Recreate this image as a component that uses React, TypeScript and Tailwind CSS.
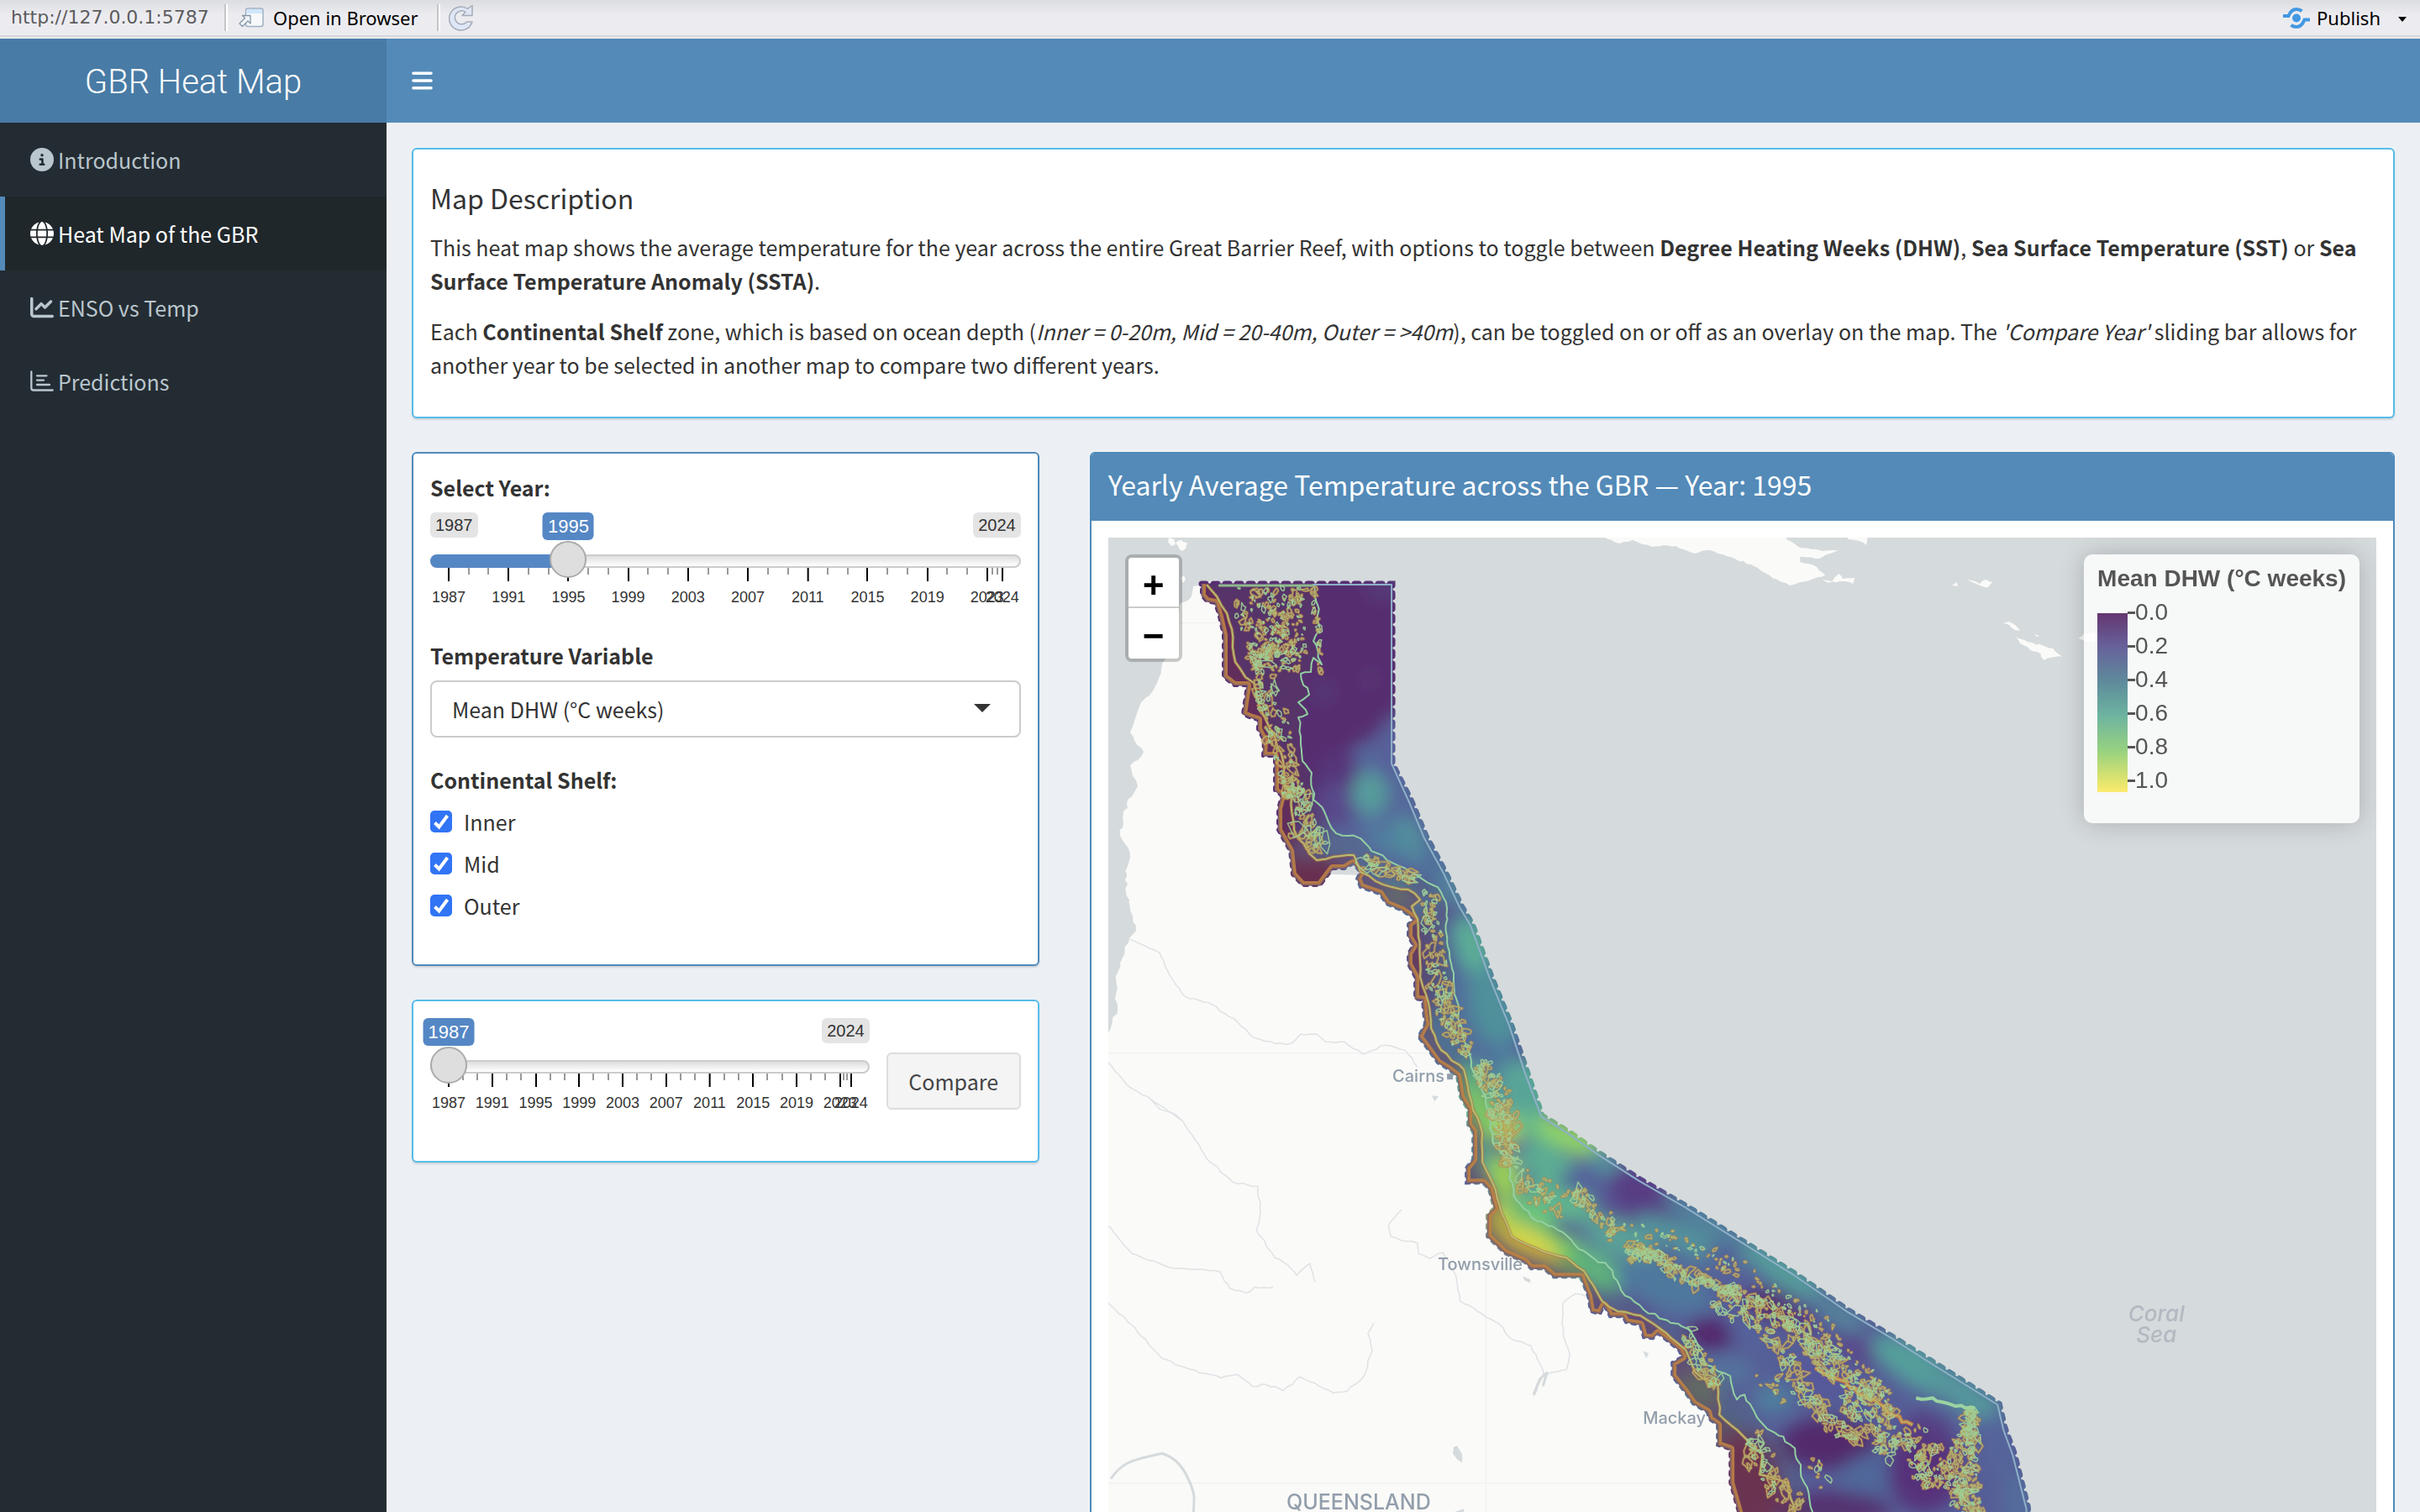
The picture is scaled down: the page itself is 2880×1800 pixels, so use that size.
import { useState } from "react";
import type { ReactNode } from "react";
import { FaBars, FaChartLine, FaCircleInfo, FaGlobe } from "react-icons/fa6";

/* ------------------------------------------------------------------ */
/* Geometry helpers                                                    */
/* ------------------------------------------------------------------ */

type Pt = [number, number];

function rng(seed: number) {
  let a = seed;
  return () => {
    a = (a + 0x6d2b79f5) | 0;
    let t = Math.imul(a ^ (a >>> 15), 1 | a);
    t = (t + Math.imul(t ^ (t >>> 7), 61 | t)) ^ t;
    return ((t ^ (t >>> 14)) >>> 0) / 4294967296;
  };
}

function parse(src: string): Pt[] {
  return src.split(" ").map((p) => {
    const [x, y] = p.split(",");
    return [Number(x), Number(y)] as Pt;
  });
}

/** Subdivides a polyline and offsets the new points, for natural edges. */
function rough(points: Pt[], step: number, amount: number, seed: number): Pt[] {
  const r = rng(seed);
  const out: Pt[] = [points[0]];
  for (let i = 1; i < points.length; i++) {
    const [ax, ay] = points[i - 1];
    const [bx, by] = points[i];
    const n = Math.max(1, Math.round(Math.hypot(bx - ax, by - ay) / step));
    for (let k = 1; k <= n; k++) {
      const t = k / n;
      const j = k === n ? 0 : amount;
      out.push([ax + (bx - ax) * t + (r() - 0.5) * 2 * j, ay + (by - ay) * t + (r() - 0.5) * 2 * j]);
    }
  }
  return out;
}

function toPath(points: Pt[], close = false) {
  return "M" + points.map(([x, y]) => `${x.toFixed(1)} ${y.toFixed(1)}`).join("L") + (close ? "Z" : "");
}

type Band = { path: [number, number, number][]; count: number; size: number; tilt: number };

/** Scatters small irregular reef outlines along bands of varying width, in a warm and a cool set. */
function reefs(bands: Band[], seed: number) {
  const r = rng(seed);
  const sets = ["", ""];
  for (const b of bands) {
    const lens = b.path.slice(1).map((p, i) => Math.hypot(p[0] - b.path[i][0], p[1] - b.path[i][1]));
    const total = lens.reduce((a, c) => a + c, 0);
    for (let i = 0; i < b.count; i++) {
      let t = r() * total;
      let k = 0;
      while (k < lens.length - 1 && t > lens[k]) t -= lens[k++];
      const f = t / lens[k];
      const [ax, ay, aw] = b.path[k];
      const [bx, by, bw] = b.path[k + 1];
      const w = aw + (bw - aw) * f;
      const off = (r() * 1.5 + r() * 0.5 - 1) * w;
      const nx = -(by - ay) / lens[k];
      const ny = (bx - ax) / lens[k];
      const cx = ax + (bx - ax) * f + nx * off;
      const cy = ay + (by - ay) * f + ny * off;
      const size = b.size * (0.25 + r() * r() * 1.5);
      const ang = b.tilt + (r() - 0.5) * 2.4;
      const n = 4 + Math.floor(r() * 5);
      const pts: Pt[] = [];
      for (let q = 0; q < n; q++) {
        const a = (q / n) * Math.PI * 2;
        const rad = size * (0.45 + r() * 1.0);
        const ex = Math.cos(a) * rad * 1.25;
        const ey = Math.sin(a) * rad * 0.7;
        pts.push([cx + ex * Math.cos(ang) - ey * Math.sin(ang), cy + ex * Math.sin(ang) + ey * Math.cos(ang)]);
      }
      sets[r() < 0.65 ? 0 : 1] += toPath(pts, true);
    }
  }
  return sets;
}

/* ------------------------------------------------------------------ */
/* Map data (map sheet units)                                          */
/* ------------------------------------------------------------------ */

const seaward = parse(
  "1430,695 1657,695 1657,909 1679,952 1697,995 1720,1038 1740,1080 1752,1100 1775,1163 1798,1219 1817,1275 1835,1328 1868,1348 1902,1372 1952,1404 2006,1435 2067,1473 2136,1516 2200,1560 2252,1591 2308,1626 2379,1671 2386,1700 2397,1730 2413,1793 2416,1830",
);

const coast = parse(
  "2078,1830 2069,1800 2059,1765 2059,1725 2044,1720 2044,1696 2034,1689 2032,1681 2015,1671 2006,1658 1990,1638 1990,1622 2002,1615 1998,1607 1973,1587 1967,1593 1956,1592 1952,1577 1935,1574 1931,1567 1916,1567 1909,1554 1904,1564 1893,1561 1890,1543 1881,1520 1849,1520 1837,1510 1822,1510 1814,1502 1791,1492 1770,1472 1770,1446 1778,1438 1772,1416 1765,1408 1745,1408 1745,1390 1753,1380 1753,1347 1747,1339 1747,1321 1738,1306 1734,1281 1724,1273 1711,1265 1698,1247 1688,1234 1696,1219 1694,1204 1693,1190 1684,1189 1684,1163 1676,1148 1676,1135 1682,1125 1676,1115 1676,1100 1683,1094 1669,1084 1650,1076 1642,1064 1619,1056 1615,1046 1619,1038 1610,1028 1600,1034 1586,1034 1571,1054 1550,1054 1538,1041 1535,1013 1521,988 1521,963 1525,947 1517,941 1517,900 1503,900 1504,881 1497,868 1497,857 1487,854 1479,850 1484,816 1469,816 1456,806 1456,756 1451,734 1446,718 1436,716 1430,709 1430,694",
);

const innerLine = parse(
  "1436,696 1448,710 1460,730 1466,749 1470,788 1482,806 1492,813 1499,841 1508,860 1517,877 1527,906 1530,934 1537,949 1540,988 1558,1016 1567,1024 1586,1020 1611,1018 1619,1038 1646,1053 1676,1059 1690,1071 1680,1079 1687,1094 1690,1163 1700,1194 1703,1224 1715,1250 1742,1273 1751,1311 1764,1349 1764,1383 1776,1408 1787,1444 1799,1472 1837,1490 1864,1497 1885,1513 1906,1548 1925,1561 1952,1566 1983,1587 2006,1607 2017,1633 2044,1648 2046,1684 2074,1709 2097,1730 2094,1755 2128,1765 2136,1800",
);

const midLine = parse(
  "1563,695 1568,720 1571,749 1563,763 1573,791 1563,783 1560,800 1548,802 1558,827 1545,836 1556,850 1545,854 1548,877 1550,906 1561,920 1563,952 1576,966 1590,992 1619,998 1632,1013 1657,1027 1676,1036 1711,1056 1722,1082 1722,1122 1728,1153 1736,1204 1740,1230 1747,1250 1753,1275 1768,1306 1776,1357 1795,1383 1801,1423 1822,1449 1860,1467 1879,1487 1914,1508 1929,1536 1956,1559 2009,1582 2032,1625 2059,1638 2067,1666 2076,1660 2094,1691 2136,1724 2147,1765 2157,1800",
);

const landWest = parse(
  "1452,693 1442,691 1432,696 1420,698 1415,714 1405,718 1399,740 1395,770 1384,788 1377,813 1356,841 1345,872 1361,895 1345,911 1354,936 1341,956 1333,995 1345,1020 1339,1048 1345,1081 1352,1102 1343,1122 1330,1158 1327,1189 1330,1201 1319,1229 1300,1250",
);

const landUnderHeat = parse(
  "1300,1840 2100,1840 2100,1790 2054,1700 2010,1645 2012,1600 1925,1567 1860,1505 1790,1475 1787,1440 1770,1390 1768,1345 1740,1290 1706,1230 1690,1150 1690,1085 1625,1042 1560,1040 1540,1000 1530,930 1500,850 1470,800 1462,730 1452,700",
);

const islands = [
  "1903,634 1910,640 1918,643 1928,647 1943,643 1955,648 1966,651 1980,649 1994,650 2006,655 2017,659 2035,655 2050,660 2066,666 2084,672 2100,682 2115,690 2130,697 2150,692 2172,685 2162,675 2142,669 2142,663 2165,665 2178,659 2187,655 2165,655 2140,651 2126,642 2122,634",
  "2195,634 2199,642 2212,644 2221,649 2224,634",
  "2168,690 2180,692 2188,683 2193,689 2207,688 2205,695 2190,692 2176,694",
  "2340,690 2356,695 2364,690 2371,693 2366,699 2356,697",
  "2323,697 2328,693 2330,698",
  "2398,756 2406,761 2418,765 2432,769 2443,772 2454,782 2440,783 2433,786 2428,778 2416,774 2404,766",
  "2382,741 2391,740 2398,744 2404,751 2398,750 2391,744",
  "2420,755 2427,757 2424,758",
  "2473,760 2480,754 2498,752 2500,764 2484,764",
  "1391,640 1397,642 1399,648 1394,650 1390,645",
  "1399,646 1406,643 1413,646 1411,653 1407,656 1402,650",
  "1405,688 1409,685 1411,690 1408,694",
].map(parse);

const rivers = [
  "1345,1118 1380,1134 1392,1161 1410,1186 1443,1196 1473,1217 1490,1234 1517,1242 1537,1242 1548,1231 1567,1231 1577,1240 1600,1240 1622,1255 1648,1244 1672,1250 1687,1270",
  "1319,1265 1343,1293 1370,1309 1407,1334 1440,1383 1467,1407 1497,1412 1500,1444 1495,1464 1517,1497 1533,1506 1543,1518 1559,1504 1565,1526",
  "1319,1459 1347,1492 1390,1508 1452,1514 1463,1533 1483,1539 1493,1532 1515,1532",
  "1319,1551 1363,1594 1383,1617 1427,1634 1453,1640 1473,1636 1490,1650 1507,1648 1527,1655 1547,1639 1587,1658 1603,1656 1623,1638 1633,1607 1628,1587 1635,1575",
  "1668,1440 1653,1457 1655,1472 1687,1480 1688,1492 1702,1498 1717,1491 1733,1520 1737,1548 1784,1576 1799,1594 1822,1602 1837,1635 1864,1630 1868,1612 1860,1587 1860,1551 1875,1540 1887,1543",
  "1837,1635 1830,1650 1825,1662",
  "1768,1412 1778,1430 1790,1434",
].map((s, i) => toPath(rough(parse(s), 6, 1.2, 11 + i)));

/* x, y, rx, ry, rotation, colour */
const heat: [number, number, number, number, number, string][] = [
  [1640, 1010, 130, 120, 0, "#55689b"],
  [1720, 1180, 70, 180, 0, "#51709b"],
  [1550, 925, 65, 70, 0, "#57357a"],
  [1450, 820, 130, 260, 0, "#572f6f"],
  [1545, 760, 150, 145, 0, "#572f6f"],
  [1630, 720, 60, 140, 0, "#572f6f"],
  [1560, 1045, 40, 26, 0, "#603360"],
  [1645, 700, 20, 14, 0, "#573a79"],
  [1575, 824, 10, 8, 0, "#58427f"],
  [1630, 808, 8, 8, 0, "#583a79"],
  [1654, 895, 14, 40, 0, "#58609a"],
  [1590, 960, 24, 30, 0, "#594a8b"],
  [1600, 1005, 30, 18, 30, "#56689a"],
  [1630, 944, 22, 26, 0, "#569b9b"],
  [1676, 998, 16, 28, -20, "#53909d"],
  [1640, 985, 20, 14, 0, "#53759e"],
  [1655, 1005, 26, 10, 20, "#50849e"],
  [1690, 1055, 26, 8, 30, "#57548f"],
  [1722, 1086, 13, 12, 0, "#594a8b"],
  [1728, 1060, 10, 26, -30, "#528a9b"],
  [1700, 1150, 22, 60, 0, "#524f85"],
  [1680, 1150, 12, 60, 0, "#5b3d74"],
  [1662, 1065, 14, 8, 20, "#5f9a76"],
  [1752, 1128, 18, 38, -20, "#5cae96"],
  [1742, 1188, 12, 20, 0, "#536a9b"],
  [1778, 1200, 28, 50, -20, "#50909b"],
  [1790, 1262, 16, 22, 0, "#4f799c"],
  [1815, 1300, 34, 40, -20, "#58a597"],
  [1750, 1290, 18, 24, 0, "#62b486"],
  [1764, 1325, 18, 34, -20, "#83d269"],
  [1795, 1345, 18, 18, 0, "#b6d957"],
  [1835, 1345, 36, 18, 20, "#67b987"],
  [1872, 1356, 48, 16, 28, "#90d468"],
  [1764, 1380, 12, 26, 0, "#56a793"],
  [1790, 1402, 18, 30, -10, "#a2dc5b"],
  [1840, 1385, 36, 22, 20, "#5cac93"],
  [1856, 1430, 44, 22, 20, "#60b48e"],
  [1876, 1406, 22, 12, 0, "#53609b"],
  [1912, 1386, 26, 14, 30, "#55919c"],
  [1957, 1420, 46, 26, 25, "#593e84"],
  [1925, 1444, 28, 10, 10, "#594a8c"],
  [1818, 1450, 36, 20, 30, "#6cc57a"],
  [1860, 1492, 50, 22, 25, "#73cd70"],
  [1815, 1478, 46, 17, 26, "#e2e34c"],
  [1784, 1452, 16, 20, 0, "#c6dc4e"],
  [1900, 1512, 36, 20, 35, "#60ba84"],
  [1928, 1475, 48, 22, 25, "#5aa097"],
  [2010, 1478, 70, 18, 25, "#52929b"],
  [2030, 1450, 60, 14, 30, "#51829c"],
  [1980, 1530, 60, 28, 20, "#50789d"],
  [1950, 1556, 22, 8, 20, "#594d8c"],
  [2036, 1588, 28, 18, 10, "#53286a"],
  [2050, 1496, 22, 12, 20, "#525f99"],
  [2110, 1555, 36, 18, 20, "#54316f"],
  [2145, 1572, 22, 14, 40, "#573c80"],
  [2120, 1512, 60, 18, 34, "#559c9a"],
  [2085, 1590, 30, 14, 20, "#54629b"],
  [2056, 1632, 32, 18, 0, "#54729c"],
  [2110, 1665, 24, 18, 0, "#507f9d"],
  [2170, 1640, 34, 24, 30, "#57589a"],
  [2022, 1655, 26, 14, 40, "#598c76"],
  [2050, 1700, 22, 16, 0, "#50637f"],
  [2075, 1765, 44, 60, 0, "#643762"],
  [2060, 1800, 40, 50, 0, "#643762"],
  [2175, 1718, 56, 30, 0, "#532b6c"],
  [2225, 1758, 34, 26, 0, "#4f689b"],
  [2290, 1750, 44, 50, 0, "#57337a"],
  [2180, 1796, 70, 20, 0, "#55306f"],
  [2210, 1606, 36, 18, 30, "#584c8c"],
  [2190, 1565, 34, 14, 34, "#54849b"],
  [2280, 1626, 60, 24, 32, "#559e9b"],
  [2340, 1662, 54, 20, 34, "#54979b"],
  [2295, 1700, 30, 16, 20, "#573d82"],
  [2378, 1720, 18, 40, -12, "#54659b"],
  [2404, 1790, 20, 40, -12, "#546c9b"],
];

const [warmReefs, coolReefs] = reefs(
  [
    { path: [[1515, 700, 52], [1515, 750, 48], [1520, 800, 34]], count: 260, size: 3, tilt: 1.2 },
    { path: [[1500, 770, 20], [1510, 850, 20]], count: 44, size: 6, tilt: 0.8 },
    { path: [[1515, 850, 18], [1528, 900, 16], [1540, 950, 14]], count: 90, size: 4, tilt: 1.2 },
    { path: [[1562, 700, 3], [1569, 750, 3], [1571, 800, 3]], count: 26, size: 3, tilt: 1.2 },
    { path: [[1544, 940, 12], [1556, 1000, 18], [1580, 1008, 12]], count: 50, size: 7, tilt: 1.9 },
    { path: [[1620, 1026, 10], [1685, 1044, 10]], count: 36, size: 6, tilt: 0.3 },
    { path: [[1702, 1062, 12], [1708, 1120, 16], [1708, 1160, 16], [1725, 1212, 14], [1746, 1256, 12]], count: 120, size: 5, tilt: 1.0 },
    { path: [[1762, 1265, 12], [1785, 1310, 18], [1792, 1350, 18], [1798, 1385, 8]], count: 120, size: 5, tilt: 1.1 },
    { path: [[1800, 1390, 10], [1830, 1415, 24], [1864, 1440, 18]], count: 42, size: 4, tilt: -0.5 },
    { path: [[1870, 1412, 8], [1900, 1445, 16], [1925, 1470, 12]], count: 46, size: 4, tilt: 0.8 },
    { path: [[1936, 1492, 12], [1965, 1492, 10], [2000, 1515, 12], [2040, 1530, 8], [2080, 1548, 14], [2120, 1568, 14], [2150, 1595, 14], [2180, 1625, 20], [2215, 1655, 22], [2250, 1690, 14]], count: 350, size: 5, tilt: 0.7 },
    { path: [[1930, 1462, 12], [2000, 1480, 14], [2060, 1510, 18], [2120, 1548, 14], [2165, 1575, 12], [2205, 1625, 14], [2250, 1664, 8]], count: 170, size: 2, tilt: 0.5 },
    { path: [[2030, 1548, 8], [2080, 1572, 10], [2120, 1600, 10], [2132, 1630, 10], [2155, 1665, 12], [2185, 1700, 12], [2215, 1712, 8]], count: 110, size: 6, tilt: 0.7 },
    { path: [[2200, 1660, 14], [2210, 1690, 18], [2250, 1700, 10]], count: 40, size: 5, tilt: 1.2 },
    { path: [[2345, 1676, 6], [2346, 1700, 14], [2330, 1750, 24], [2348, 1805, 18]], count: 260, size: 4, tilt: 1.2 },
    { path: [[2230, 1716, 20], [2290, 1724, 26], [2300, 1770, 24]], count: 130, size: 4, tilt: 1.0 },
    { path: [[2006, 1585, 10], [2022, 1620, 14], [2042, 1648, 8]], count: 50, size: 5, tilt: 1.0 },
    { path: [[2085, 1705, 14], [2096, 1745, 18], [2140, 1795, 22]], count: 50, size: 6, tilt: 1.4 },
    { path: [[2120, 1640, 50], [2110, 1670, 40]], count: 14, size: 4, tilt: 0.6 },
    { path: [[2152, 1740, 20], [2175, 1768, 10]], count: 10, size: 3, tilt: 0.6 },
  ],
  77,
);

const spine = toPath(rough(parse("2160,1628 2188,1642 2212,1660 2238,1672 2252,1684 2276,1696"), 7, 3, 5));
const hook = toPath(rough(parse("2280,1664 2300,1664 2322,1672 2350,1676"), 6, 2, 9));
const heatOutline = toPath([...seaward, ...coast], true);
const shelf = toPath([...coast, ...innerLine], true);
const inshore = toPath([...innerLine, ...[...midLine].reverse()], true);
const land = toPath([...rough(landWest, 6, 2, 3), ...landUnderHeat], true);
const coastPath = toPath(coast);
const innerPath = toPath(rough(innerLine, 10, 1.5, 21));
const midPath = toPath(rough(midLine, 7, 2, 22));

function ReefMap() {
  return (
    <svg
      viewBox="1319 640 1509 1200"
      preserveAspectRatio="xMinYMin slice"
      className="block h-[1200px] w-full bg-[#d5dadc]"
      role="img"
      aria-label="Heat map of the Great Barrier Reef"
    >
      <defs>
        <mask id="heat-mask" maskUnits="userSpaceOnUse" x="1319" y="640" width="1509" height="1200">
          <path d={heatOutline} fill="#fff" stroke="#fff" strokeWidth="1" strokeLinejoin="round" />
          <path d={toPath(seaward)} fill="none" stroke="#fff" strokeWidth="7" strokeLinecap="round" strokeDasharray="5 9" />
          <path d={coastPath} fill="none" stroke="#fff" strokeWidth="4" strokeLinecap="round" strokeDasharray="4 7" />
        </mask>
        <clipPath id="heat-clip">
          <path d={heatOutline} />
        </clipPath>
        <filter id="heat-blur" filterUnits="userSpaceOnUse" x="1300" y="620" width="1600" height="1300">
          <feGaussianBlur stdDeviation="10" />
        </filter>
      </defs>

      <g fill="#fafaf8">
        <path d={land} />
        {islands.map((p, i) => (
          <path key={i} d={toPath(rough(p, 5, 1.2, 40 + i), true)} />
        ))}
      </g>
      <g stroke="#efefee" strokeWidth="1">
        <path d="M1319 1253.5H1700M1319 1765.5H2060M1768.500 1510V1840M1400 741.500H1452" />
      </g>
      <g fill="none" stroke="#dfe3e5" strokeWidth="1.500" strokeLinejoin="round">
        {rivers.map((d, i) => (
          <path key={i} d={d} />
        ))}
        <path d="M1370 1309L1380 1320L1398 1326L1407 1334" />
        <path d="M1825 1660L1832 1642L1841 1634L1836 1650" stroke="#d5dadc" strokeWidth="3" />
        <path d="M1322 1760Q1332 1746 1343 1741T1383 1730Q1402 1736 1412 1756T1421 1785L1419 1840" stroke="#d5dadc" strokeWidth="3" />
      </g>
      <g fill="#d5dadc">
        <path d="M1730 1722L1734 1721L1740 1731L1740 1741L1734 1737L1729 1730Z" />
        <path d="M1812 1519L1821 1523L1821 1527L1814 1524Z" />
        <path d="M1955 1608L1962 1611L1959 1617Z" />
        <path d="M1704 1304L1712 1305L1707 1311Z" />
        <path d="M1730 1800L1742 1796L1742 1810L1728 1812Z" />
      </g>

      <g mask="url(#heat-mask)">
        <rect x="1319" y="640" width="1509" height="1200" fill="#565f98" />
        <g filter="url(#heat-blur)">
          {heat.map(([x, y, rx, ry, a, c], i) => (
            <ellipse key={i} cx={x} cy={y} rx={rx} ry={ry} fill={c} transform={`rotate(${a} ${x} ${y})`} />
          ))}
        </g>
        <path d={shelf} fill="#7a2a2c" fillOpacity="0.3" />
        <path d={inshore} fill="#5a6b30" fillOpacity="0.1" />
      </g>

      <g clipPath="url(#heat-clip)" fill="none" strokeLinejoin="round">
        <path d={coastPath} stroke="#bd8144" strokeOpacity="0.9" strokeWidth="10" />
        <path d={coastPath} stroke="#6b5878" strokeOpacity="0.7" strokeWidth="3" />
      </g>
      <g fill="none" strokeLinejoin="round">
        <path d={innerPath} stroke="#bd7040" strokeOpacity="0.6" strokeWidth="4" />
        <path d={innerPath} stroke="#b4bd70" strokeWidth="2" />
        <path d="M1450 697H1563" stroke="#8fb98e" strokeWidth="3" />
        <path d={midPath} stroke="#93cfa3" strokeWidth="2" />
        <path d={warmReefs} stroke="#c07a48" strokeOpacity="0.6" strokeWidth="3" />
        <path d={spine} stroke="#c07a48" strokeWidth="5" />
        <path d={warmReefs} stroke="#b5bd70" strokeOpacity="0.85" strokeWidth="1.200" />
        <path d={coolReefs} stroke="#9fcf96" strokeOpacity="0.9" strokeWidth="1.500" />
        <path d={spine} stroke="#b9b768" strokeWidth="1.500" />
        <path d={hook} stroke="#9bd3a0" strokeWidth="4" />
        <path
          d="M1563 696H1656V909L1677 955L1695 998L1718 1040L1737 1080L1750 1102L1773 1165L1796 1221L1815 1278L1834 1329L1867 1350L1901 1374L1951 1406L2005 1437L2066 1475L2135 1518L2199 1562L2251 1593L2306 1628L2377 1672L2384 1702L2395 1732L2411 1795L2415 1840"
          stroke="#8eb0c8"
          strokeWidth="2"
        />
      </g>

      <g className="fill-[#929eab] font-['Inter','Liberation_Sans',sans-serif] text-[20px] font-medium">
        <text x="1657" y="1288">Cairns</text>
        <rect x="1722" y="1278" width="7" height="7" />
        <text x="1711" y="1512">Townsville</text>
        <text x="1955" y="1695">Mackay</text>
        <text x="1531" y="1797" className="text-[25px]">QUEENSLAND</text>
      </g>
      <g className="fill-[#b1b9c1] font-['Inter','Liberation_Sans',sans-serif] text-[26px] font-medium italic" textAnchor="middle">
        <text x="2566" y="1573">Coral</text>
        <text x="2566" y="1598">Sea</text>
      </g>
    </svg>
  );
}

/* ------------------------------------------------------------------ */
/* Toolbar icons                                                       */
/* ------------------------------------------------------------------ */

function OpenIcon() {
  return (
    <svg viewBox="0 0 30 24" className="h-6 w-[30px]" aria-hidden="true">
      <rect x="8.500" y="1" width="20.500" height="21.500" rx="2.500" fill="#f6f8fb" stroke="#9fb0c4" strokeWidth="1.500" />
      <path d="M9.500 7V4a2 2 0 0 1 2-2h14.500a2 2 0 0 1 2 2v3z" fill="#cfe6fb" />
      <path d="M4.500 9.500H14V19l-3-3-6.500 6.500-3.500-3.500L7.500 12.500z" fill="#f2f5f8" stroke="#8496a8" strokeWidth="1.300" strokeLinejoin="round" />
    </svg>
  );
}

function ReloadIcon() {
  return (
    <svg viewBox="0 0 30 32" className="h-8 w-[30px]" aria-hidden="true">
      <path
        d="M22.500 5.500L28 1.500V13.500H16l4-4.200A8 8 0 1 0 21.500 21H28A14 14 0 1 1 22.500 5.500z"
        fill="#dfe7f6"
        stroke="#a5acb8"
        strokeWidth="1.500"
        strokeLinejoin="round"
      />
    </svg>
  );
}

function PublishIcon() {
  return (
    <svg viewBox="0 0 32 25" className="h-[25px] w-8" aria-hidden="true" fill="none" stroke="#4398e2" strokeWidth="4">
      <circle cx="16" cy="12.500" r="5" fill="#4398e2" stroke="none" />
      <path d="M0 10h6.500C8.500 5 11.500 2 16 2c2.500 0 4.500.7 6.500 2.200" />
      <path d="M32 14.500h-6.500C23.500 19.500 20.500 23 16 23c-2.500 0-4.500-.7-6.500-2.200" />
    </svg>
  );
}

function BarListIcon() {
  return (
    <svg viewBox="0 0 28 26" className="h-[26px] w-7" aria-hidden="true" fill="none" stroke="currentColor" strokeWidth="2.300" strokeLinecap="round">
      <path d="M1.300 1.500V21q0 2.500 2.500 2.500H26.700M8 6.300H19.500M8 11.600H16M8 17H23" />
    </svg>
  );
}

/* ------------------------------------------------------------------ */
/* Controls                                                            */
/* ------------------------------------------------------------------ */

const MIN = 1987;
const MAX = 2024;
const MAJOR = [1987, 1991, 1995, 1999, 2003, 2007, 2011, 2015, 2019, 2023, 2024];
const pct = (year: number) => `${((year - MIN) / (MAX - MIN)) * 100}%`;

function YearSlider({ id, label, value, onChange }: { id: string; label: string; value: number; onChange: (v: number) => void }) {
  const minor = MAJOR.slice(0, -1).flatMap((y, i) => {
    const gap = (MAJOR[i + 1] - y) / 3;
    return [y + gap, y + gap * 2];
  });
  return (
    <div className="relative h-[120px] font-['Liberation_Sans',Arial,sans-serif]">
      <div className="flex h-[50px] items-start text-[20px] leading-[30px] text-[#333]">
        {value > MIN && <span className="rounded-md bg-[#e4e4e4] px-[6px]">{MIN}</span>}
        <span className="ml-auto rounded-md bg-[#e4e4e4] px-[6px]">{MAX}</span>
      </div>
      <div className="relative mx-[22px] -mt-[50px] h-[50px]">
        <output
          htmlFor={id}
          className="absolute top-0 h-[33px] -translate-x-1/2 rounded-md bg-[#5587c5] px-[6px] text-[22px] leading-[33px] text-white"
          style={{ left: pct(value) }}
        >
          {value}
        </output>
      </div>
      <div className="relative h-4">
        <div className="h-4 overflow-hidden rounded-lg border-2 border-[#ccc] bg-linear-to-b from-[#dedede] to-white" />
        <div
          className="absolute top-0 left-0 h-4 rounded-l-lg bg-[#5587c5]"
          style={{ width: value === MIN ? 0 : `calc(22px + (100% - 44px) * ${(value - MIN) / (MAX - MIN)})` }}
        />
      </div>
      <div className="relative mx-[22px] h-11 text-[18px] leading-5 text-[#333]">
        {minor.map((y) => (
          <i key={y} className="absolute top-0 h-2 w-[2px] -translate-x-1/2 bg-[#999]" style={{ left: pct(y) }} />
        ))}
        {MAJOR.map((y) => (
          <span key={y} className="absolute top-0 flex -translate-x-1/2 flex-col items-center" style={{ left: pct(y) }}>
            <i className="mb-[9px] h-4 w-[2px] bg-black" />
            {y}
          </span>
        ))}
      </div>
      <input
        id={id}
        type="range"
        aria-label={label}
        min={MIN}
        max={MAX}
        value={value}
        onChange={(e) => onChange(Number(e.target.value))}
        className="absolute top-[34px] left-0 m-0 h-11 w-full cursor-pointer appearance-none bg-transparent [&::-webkit-slider-thumb]:size-11 [&::-webkit-slider-thumb]:appearance-none [&::-webkit-slider-thumb]:rounded-full [&::-webkit-slider-thumb]:border-2 [&::-webkit-slider-thumb]:border-[#ababab] [&::-webkit-slider-thumb]:bg-[#dedede]"
      />
    </div>
  );
}

function Shelf({ name }: { name: string }) {
  const [on, setOn] = useState(true);
  return (
    <label className="flex h-10 items-center gap-[14px]">
      <span className="relative flex size-[26px]">
        <input
          type="checkbox"
          checked={on}
          onChange={() => setOn(!on)}
          className="peer size-[26px] appearance-none rounded-[5px] border-2 border-[#767676] checked:border-[#3174f5] checked:bg-[#3174f5]"
        />
        <svg viewBox="0 0 26 26" className="pointer-events-none absolute inset-0 hidden peer-checked:block" fill="none" stroke="#fff" strokeWidth="4" aria-hidden="true">
          <path d="M5.500 14.500L10.500 19.500L20.500 6" />
        </svg>
      </span>
      {name}
    </label>
  );
}

function Box({ tone, className = "", children }: { tone: "info" | "primary"; className?: string; children: ReactNode }) {
  const border = tone === "info" ? "border-[#56bce9]" : "border-[#4f8ab8]";
  return (
    <section className={`rounded-md border-2 bg-white p-5 shadow-[0_2px_2px_rgba(0,0,0,0.12)] ${border} ${className}`}>{children}</section>
  );
}

const nav = [
  { label: "Introduction", icon: <FaCircleInfo className="size-7" /> },
  { label: "Heat Map of the GBR", icon: <FaGlobe className="size-7" />, active: true },
  { label: "ENSO vs Temp", icon: <FaChartLine className="size-7" /> },
  { label: "Predictions", icon: <BarListIcon /> },
];

const legend = ["0.0", "0.2", "0.4", "0.6", "0.8", "1.0"];

export default function App() {
  const [year, setYear] = useState(1995);
  const [other, setOther] = useState(1987);
  const [variable, setVariable] = useState("Mean DHW (°C weeks)");

  return (
    <div className="flex h-screen flex-col overflow-hidden bg-[#ecf0f5] font-['Noto_Sans_CJK_SC','Open_Sans',sans-serif] text-[25px] leading-10 text-[#333]">
      <div className="flex h-[46px] shrink-0 items-center border-b-2 border-[#e9eaed] bg-linear-to-b from-[#dcdde1] to-[#ececf0] to-40% pb-[2px] font-['Noto_Sans','Open_Sans',sans-serif] text-[22px] leading-[42px] text-black shadow-[inset_0_-2px_0_#d5d7db]">
        <span className="w-[267px] pl-[13px] font-['DejaVu_Sans',sans-serif] text-[#5c5c5e]">http://127.0.0.1:5787</span>
        <span className="h-8 w-[4px] border-r-2 border-l-2 border-r-white border-l-[#c4c5c9]" />
        <button className="flex items-center gap-[11px] pl-[13px]">
          <OpenIcon />
          Open in Browser
        </button>
        <span className="ml-[22px] h-8 w-[4px] border-r-2 border-l-2 border-r-white border-l-[#c4c5c9]" />
        <button className="pl-[10px]" aria-label="Reload">
          <ReloadIcon />
        </button>
        <button className="ml-auto flex items-center pr-[16px]">
          <PublishIcon />
          <span className="ml-2">Publish</span>
          <svg viewBox="0 0 10 6" className="mt-1 ml-[21px] h-[6px] w-[10px]" aria-hidden="true">
            <path d="M0 0H10L5 6Z" />
          </svg>
        </button>
      </div>

      <div className="flex min-h-0 flex-1">
        <aside className="w-[460px] shrink-0 bg-[#242c33]">
          <a href="#home" className="flex h-[100px] items-center justify-center bg-[#487ba5] pt-1 font-['Roboto','Liberation_Sans',sans-serif] text-[40px] font-light text-white">
            GBR Heat Map
          </a>
          <nav>
            {nav.map((n) => (
              <a
                key={n.label}
                href={`#${n.label}`}
                className={
                  n.active
                    ? "flex h-[88px] items-center gap-[5px] border-l-6 border-[#538ab8] bg-[#1f272b] pl-[30px] text-white"
                    : "flex h-[88px] items-center gap-[5px] pl-9 text-[#b9c6cd]"
                }
              >
                {n.icon}
                {n.label}
              </a>
            ))}
          </nav>
        </aside>

        <div className="flex min-w-0 flex-1 flex-col">
          <header className="flex h-[100px] shrink-0 items-center bg-[#538ab8] pl-[30px]">
            <button aria-label="Toggle navigation" className="text-white">
              <FaBars className="size-7 w-[25px]" />
            </button>
          </header>

          <main className="min-h-0 flex-1 overflow-hidden p-[30px]">
            <Box tone="info">
              <h3 className="mt-[18px] mb-5 text-[32px] leading-[38px]">Map Description</h3>
              <p className="mb-5">
                This heat map shows the average temperature for the year across the entire Great Barrier Reef, with options to toggle between{" "}
                <b>Degree Heating Weeks (DHW)</b>, <b>Sea Surface Temperature (SST)</b> or <b>Sea Surface Temperature Anomaly (SSTA)</b>.
              </p>
              <p className="mb-[22px]">
                Each <b>Continental Shelf</b> zone, which is based on ocean depth (<i>Inner = 0-20m, Mid = 20-40m, Outer = &gt;40m</i>), can be toggled
                on or off as an overlay on the map. The <i>'Compare Year'</i> sliding bar allows for another year to be selected in another map to
                compare two different years.
              </p>
            </Box>

            <div className="mt-10 grid grid-cols-3 items-start gap-[60px]">
              <div className="flex flex-col gap-10">
                <Box tone="primary">
                  <label htmlFor="year" className="mb-[10px] block font-bold">
                    Select Year:
                  </label>
                  <YearSlider id="year" label="Select Year" value={year} onChange={setYear} />
                  <label htmlFor="variable" className="mt-[30px] mb-[10px] block font-bold">
                    Temperature Variable
                  </label>
                  <div className="relative">
                    <select
                      id="variable"
                      value={variable}
                      onChange={(e) => setVariable(e.target.value)}
                      className="h-[68px] w-full appearance-none rounded-lg border-2 border-[#ccc] bg-white pl-6 leading-10"
                    >
                      <option>Mean DHW (°C weeks)</option>
                      <option>Mean SST (°C)</option>
                      <option>Mean SSTA (°C)</option>
                    </select>
                    <svg viewBox="0 0 20 10" className="pointer-events-none absolute top-7 right-9 h-[10px] w-5 fill-[#333]" aria-hidden="true">
                      <path d="M0 0H20L10 10Z" />
                    </svg>
                  </div>
                  <fieldset className="mt-[30px] mb-[30px]">
                    <legend className="mb-[10px] font-bold">Continental Shelf:</legend>
                    <div className="flex flex-col gap-[10px]">
                      <Shelf name="Inner" />
                      <Shelf name="Mid" />
                      <Shelf name="Outer" />
                    </div>
                  </fieldset>
                </Box>

                <Box tone="info">
                  <div className="flex h-[150px] items-center gap-5">
                    <div className="flex-1 self-start">
                      <YearSlider id="other" label="Compare Year" value={other} onChange={setOther} />
                    </div>
                    <button className="h-[68px] w-40 rounded-md border-2 border-[#ddd] bg-[#f4f4f4] text-[#444]">Compare</button>
                  </div>
                </Box>
              </div>

              <section className="col-span-2 overflow-hidden rounded-md border-2 border-[#4f8ab8] bg-white">
                <h2 className="bg-[#538ab8] px-5 pt-4 pb-6 text-[32px] leading-[40px] text-white">
                  Yearly Average Temperature across the GBR — Year: {year}
                </h2>
                <div className="p-5">
                  <div className="relative overflow-hidden">
                    <ReefMap />
                    <div className="absolute top-5 left-5 flex flex-col overflow-hidden rounded-lg border-4 border-black/20 bg-clip-padding font-['Liberation_Mono',monospace] text-[44px] font-bold text-black">
                      <button aria-label="Zoom in" className="h-[60px] w-[60px] border-b-2 border-[#ccc] bg-white pt-3 leading-[48px]">
                        +
                      </button>
                      <button aria-label="Zoom out" className="h-[60px] w-[60px] bg-white pt-3 leading-[48px]">
                        −
                      </button>
                    </div>
                    <aside className="absolute top-5 right-5 h-80 rounded-[10px] bg-white/80 px-4 py-[9px] font-['Liberation_Sans',Arial,sans-serif] text-[28px] leading-[40px] text-[#555] shadow-[0_0_30px_rgba(0,0,0,0.2)]">
                      <h4 className="font-bold">{variable}</h4>
                      <div className="flex">
                        <div className="mt-[21px] h-[213px] w-9 bg-[linear-gradient(#64366f,#67629b_19%,#5e8a9b_38%,#6db3a0_57%,#97d280_77%,#e6e66c_95%,#fdea71)]" />
                        <ul>
                          {legend.map((v) => (
                            <li key={v} className="flex items-center">
                              <span className="h-[3px] w-[9px] bg-[#555]" />
                              {v}
                            </li>
                          ))}
                        </ul>
                      </div>
                    </aside>
                  </div>
                </div>
              </section>
            </div>
          </main>
        </div>
      </div>
    </div>
  );
}
